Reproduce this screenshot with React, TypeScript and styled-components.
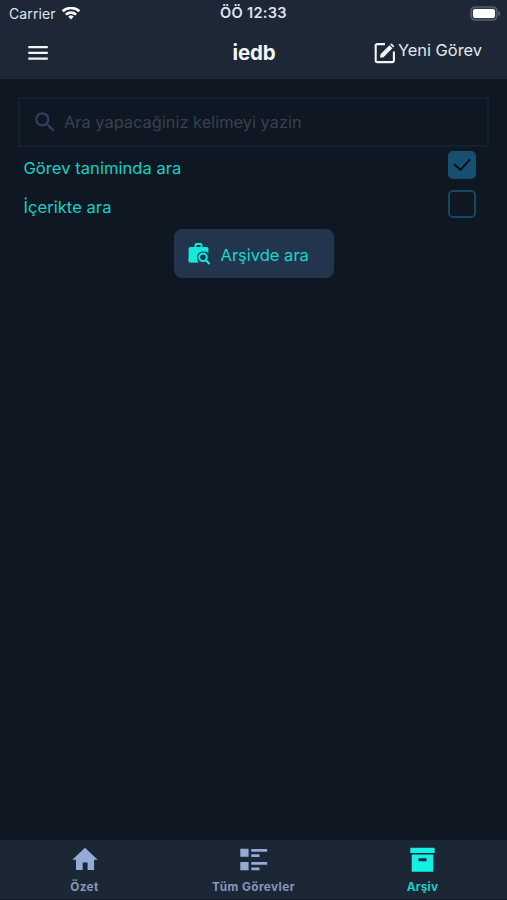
import React from "react";
import styled, { createGlobalStyle } from "styled-components";

const GlobalStyle = createGlobalStyle`
  * { box-sizing: border-box; }
  body { margin: 0; background: #0f1723; font-family: Inter, "Liberation Sans", sans-serif; }
`;

const Screen = styled.div`
  width: 507px;
  height: 900px;
  display: flex;
  flex-direction: column;
  background: #0f1723;
`;

const Header = styled.header`
  height: 79px;
  background: #1e2735;
  flex: none;
`;

const StatusBar = styled.div`
  height: 27px;
  display: grid;
  grid-template-columns: 1fr auto 1fr;
  align-items: center;
  padding: 0 6px 0 9px;
  color: #dfe5ed;
  font-size: 14px;
  line-height: 27px;
`;

const Carrier = styled.div`
  display: flex;
  align-items: center;
  gap: 6px;
  letter-spacing: 0.12px;
`;

const Clock = styled.div`
  font-size: 14.6px;
  font-weight: 600;
  letter-spacing: 0.28px;
  margin-right: 3px;
`;

const BatterySlot = styled.div`
  display: flex;
  justify-content: flex-end;
`;

const NavBar = styled.div`
  height: 52px;
  display: grid;
  grid-template-columns: 1fr auto 1fr;
  align-items: center;
  padding: 0 25px 0 26px;
  color: #f1f4f8;
`;

const IconButton = styled.button`
  display: flex;
  border: 0;
  padding: 0;
  background: none;
  color: inherit;
`;

const Title = styled.h1`
  margin: 0;
  font-size: 20.5px;
  font-weight: 700;
  line-height: 50px;
  letter-spacing: -0.2px;
`;

const NewTask = styled(IconButton)`
  justify-self: end;
  align-items: center;
  gap: 2px;
  font: 400 16.4px/24px Inter, sans-serif;
  color: #e4e8ee;
`;

const NewTaskLabel = styled.span`
  padding-bottom: 6px;
`;

const Content = styled.main`
  flex: 1;
  display: flex;
  flex-direction: column;
  padding: 18px 18px 0;
`;

const SearchBox = styled.div`
  height: 50px;
  display: flex;
  align-items: center;
  gap: 6px;
  padding-left: 12px;
  border: 2px solid #13212d;
  color: #343e63;
`;

const SearchInput = styled.input`
  flex: 1;
  border: 0;
  padding: 0;
  outline: 0;
  background: transparent;
  font: 400 16.4px/24px Inter, sans-serif;
  color: #14dfd5;
  &::placeholder { color: #384150; opacity: 1; }
`;

const Options = styled.div`
  margin-top: -1px;
`;

const OptionRow = styled.label`
  height: 39px;
  display: flex;
  align-items: center;
  justify-content: space-between;
  padding: 0 13px 0 5.5px;
  color: #18cfc8;
  font-size: 16.5px;
  letter-spacing: 0.06px;
  line-height: 39px;
`;

const OptionText = styled.span`
  padding-top: 5px;
`;

const Checkbox = styled.span<{ $checked?: boolean }>`
  width: 28px;
  height: 28px;
  margin-bottom: 1px;
  border: 2px solid #174760;
  border-color: ${(p) => (p.$checked ? "#174f70" : "#174760")};
  border-radius: 5px;
  background: ${(p) => (p.$checked ? "#174f70" : "transparent")};
  display: flex;
  align-items: center;
  justify-content: center;
`;

const ArchiveButton = styled.button`
  align-self: center;
  width: 160px;
  height: 49px;
  margin-top: 5px;
  padding: 0 0 0 13px;
  display: flex;
  align-items: center;
  gap: 9px;
  border: 0;
  border-radius: 8px;
  background: #22354c;
  color: #15e9df;
  font: 400 16.5px/49px Inter, sans-serif;
`;

const ButtonLabel = styled.span`
  padding-top: 4px;
  color: #19d6cf;
`;

const TabBar = styled.nav`
  height: 60px;
  flex: none;
  display: grid;
  grid-template-columns: repeat(3, 1fr);
  background: #1c2735;
  border-bottom: 1px solid #141a2a;
`;

const Tab = styled.a<{ $active?: boolean }>`
  display: flex;
  flex-direction: column;
  align-items: center;
  padding-top: 4px;
  color: ${(p) => (p.$active ? "#13f0e4" : "#93acd6")};
`;

const TabLabel = styled.span<{ $active?: boolean }>`
  margin-top: 5px;
  color: ${(p) => (p.$active ? "#17d2ca" : "#8498bc")};
  font-size: 11.8px;
  font-weight: 700;
  line-height: 16px;
  letter-spacing: ${(p) => (p.$active ? 0.2 : 0.42)}px;
`;

const WifiIcon = () => (
  <svg width="18" height="14" viewBox="0 0 18 14" fill="none" stroke="#fff" strokeWidth="2.6">
    <path d="M.7 4.2C5.2 0 12.8 0 17.3 4.2M3.9 7.6c2.8-2.7 7.4-2.7 10.2 0" />
    <path d="M9 8.4c-1.2 0-2.1.5-2.8 1.2L9 12.6l2.8-3c-.7-.7-1.6-1.2-2.8-1.2Z" fill="#fff" stroke="none" />
  </svg>
);

const BatteryIcon = () => (
  <svg width="31" height="15" viewBox="0 0 31 15">
    <rect x="1" y=".9" width="26" height="13.2" rx="4" fill="#303947" stroke="#565f6c" strokeWidth="1.5" />
    <rect x="3" y="3" width="22" height="9" rx="2" fill="#fff" />
    <path d="M28.5 5.2c2.3.8 2.3 3.8 0 4.6Z" fill="#626b77" />
  </svg>
);

const MenuIcon = () => (
  <svg width="24" height="24" viewBox="0 0 24 24" fill="currentColor">
    <path d="M2.3 5h19.5v2.3H2.3ZM2.3 10.8h19.5v2.3H2.3ZM2.3 16.4h19.5v2.3H2.3Z" />
  </svg>
);

const EditIcon = () => (
  <svg width="22" height="22" viewBox="0 0 22 22" fill="none">
    <path d="M11 2.1H3.1a1.4 1.4 0 0 0-1.4 1.4v15.2a1.4 1.4 0 0 0 1.4 1.4h15.4a1.4 1.4 0 0 0 1.4-1.4V9.6" stroke="#f1f4f8" strokeWidth="2.1" />
    <path d="m6.5 12.2 8.9-8.9 3 3-8.9 8.9-3.4.5Z" fill="#f1f4f8" />
    <path d="m16.2 2.5.7-.7q.5-.5 1 0l2 2q.5.5 0 1l-.7.7Z" fill="#f1f4f8" />
  </svg>
);

const SearchIcon = () => (
  <svg width="26" height="26" viewBox="0 0 24 24" fill="currentColor">
    <path d="M15.5 14h-.79l-.28-.27A6.5 6.5 0 1 0 13.73 14.43l.27.28v.79l5.2 5.19 1.49-1.49ZM9.5 14a4.5 4.5 0 1 1 0-9 4.5 4.5 0 0 1 0 9Z" />
  </svg>
);

const CheckIcon = () => (
  <svg width="20" height="18" viewBox="0 0 20 18" fill="none" stroke="#071019" strokeWidth="2">
    <path d="m2.2 8.2 6.3 5.6L18 3.4" />
  </svg>
);

const BriefcaseSearchIcon = () => (
  <svg width="25" height="25" viewBox="0 0 25 25" fill="none">
    <path d="M8.5 7V4.1q0-1.2 1.2-1.2h3.6q1.2 0 1.2 1.2V7" stroke="currentColor" strokeWidth="2" />
    <path d="M3.2 6h16.6q1.6 0 1.6 1.6v13.6H3.2q-1.6 0-1.6-1.6V7.6Q1.6 6 3.2 6Z" fill="currentColor" />
    <path d="M10.2 23.5V16q0-5.5 6.2-5.5 6.8 0 6.8 6v7Z" fill="#22354c" />
    <path d="M1.6 17h8q0 2.5 2.2 4.5H3.2q-1.6 0-1.6-1.6Z" fill="currentColor" />
    <circle cx="16" cy="16.3" r="3.8" stroke="currentColor" strokeWidth="2" />
    <path d="m18.7 19.1 3.8 3.9" stroke="currentColor" strokeWidth="2.2" />
  </svg>
);

const HomeIcon = () => (
  <svg width="30" height="30" viewBox="0 0 30 30" fill="currentColor">
    <path d="M15 3.8 27.7 15.7h-3.6V26h-6.5v-7.6h-4.9V26H6V15.7H2.3Z" />
  </svg>
);

const ListIcon = () => (
  <svg width="30" height="30" viewBox="0 0 30 30" fill="currentColor">
    <path d="M1.3 4.8h8.3v8H1.3ZM12.3 5h15.9v2.8H12.3ZM12.3 10.2h8.2V13h-8.2ZM1.3 18h8.3v8.2H1.3ZM12.3 18h15.9v2.8H12.3ZM12.3 23.4h8.2v2.8h-8.2Z" />
  </svg>
);

const ArchiveIcon = () => (
  <svg width="30" height="30" viewBox="0 0 30 30" fill="currentColor">
    <path fillRule="evenodd" d="M2.3 3.7h24.3v5.4H2.3ZM3.7 10.5h21.5v17.2H3.7ZM10.5 14.3v2.9h8v-2.9Z" />
  </svg>
);

export default function App() {
  return (
    <Screen>
      <GlobalStyle />
      <Header>
        <StatusBar>
          <Carrier>Carrier <WifiIcon /></Carrier>
          <Clock>ÖÖ 12:33</Clock>
          <BatterySlot><BatteryIcon /></BatterySlot>
        </StatusBar>
        <NavBar>
          <IconButton aria-label="Menü"><MenuIcon /></IconButton>
          <Title>iedb</Title>
          <NewTask><EditIcon /><NewTaskLabel>Yeni Görev</NewTaskLabel></NewTask>
        </NavBar>
      </Header>
      <Content>
        <SearchBox>
          <SearchIcon />
          <SearchInput placeholder="Ara yapacağiniz kelimeyi yazin" />
        </SearchBox>
        <Options>
          <OptionRow>
            <OptionText>Görev taniminda ara</OptionText>
            <Checkbox $checked><CheckIcon /></Checkbox>
          </OptionRow>
          <OptionRow>
            <OptionText>İçerikte ara</OptionText>
            <Checkbox />
          </OptionRow>
        </Options>
        <ArchiveButton><BriefcaseSearchIcon /><ButtonLabel>Arşivde ara</ButtonLabel></ArchiveButton>
      </Content>
      <TabBar>
        <Tab><HomeIcon /><TabLabel>Özet</TabLabel></Tab>
        <Tab><ListIcon /><TabLabel>Tüm Görevler</TabLabel></Tab>
        <Tab $active><ArchiveIcon /><TabLabel $active>Arşiv</TabLabel></Tab>
      </TabBar>
    </Screen>
  );
}
